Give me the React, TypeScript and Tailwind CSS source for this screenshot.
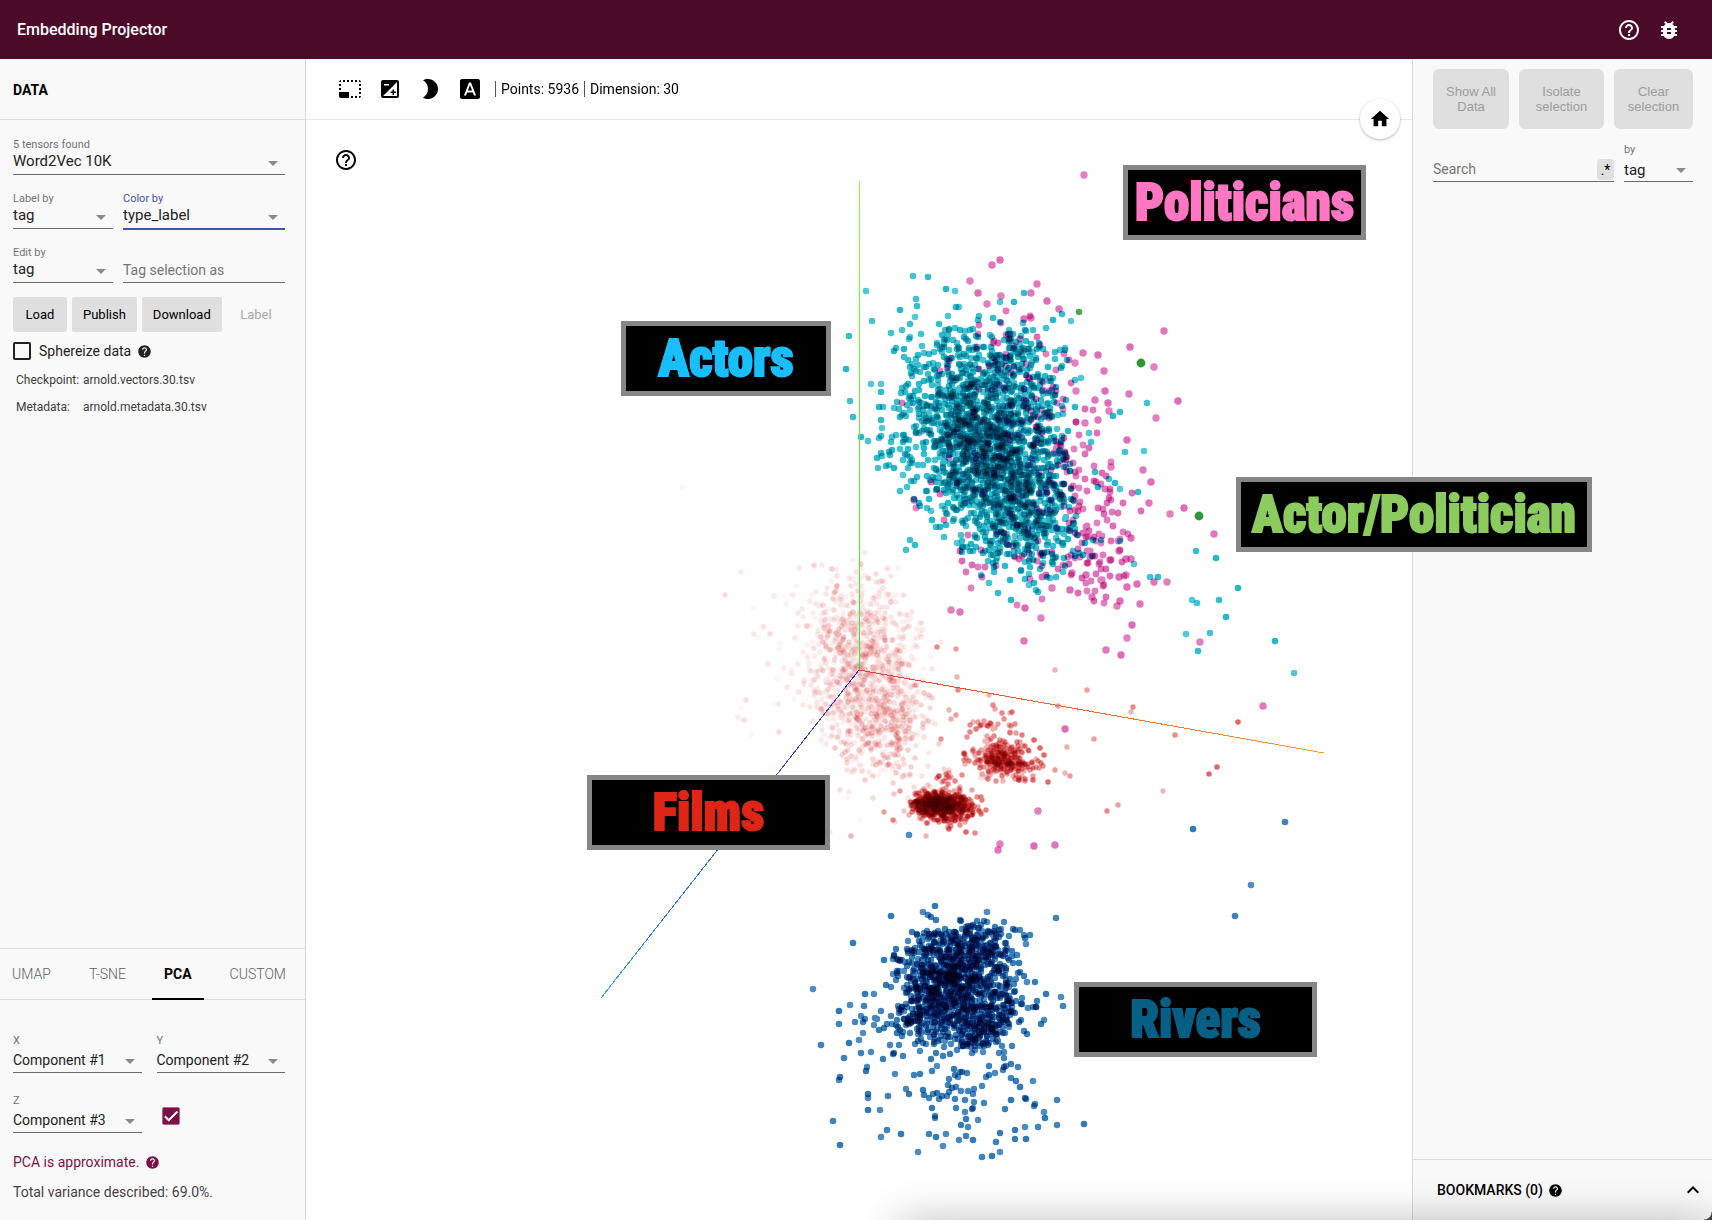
import { useId } from "react";
import type { ReactNode } from "react";
import {
  MdBrightness2,
  MdBugReport,
  MdCheck,
  MdExposure,
  MdFontDownload,
  MdHelp,
  MdHelpOutline,
  MdHome,
  MdKeyboardArrowUp,
  MdPhotoSizeSelectSmall,
} from "react-icons/md";

/* ---------- point cloud data ---------- */

type Point = [number, number];

function randomSource(seed: number) {
  let a = seed;
  return () => {
    a = (a + 0x6d2b79f5) | 0;
    let t = Math.imul(a ^ (a >>> 15), 1 | a);
    t = (t + Math.imul(t ^ (t >>> 7), 61 | t)) ^ t;
    return ((t ^ (t >>> 14)) >>> 0) / 4294967296;
  };
}

type Cluster = { n: number; x: number; y: number; sx: number; sy: number; tilt?: number; max?: number };

/* Gaussian blob cut off at `max` deviations and turned by `tilt` degrees. */
function blob(rand: () => number, c: Cluster): Point[] {
  const out: Point[] = [];
  const a = ((c.tilt ?? 0) * Math.PI) / 180;
  const max = c.max ?? 2.3;
  while (out.length < c.n) {
    const r = Math.sqrt(-2 * Math.log(1 - rand()));
    const t = rand() * Math.PI * 2;
    if (r > max) continue;
    const dx = r * Math.cos(t) * c.sx;
    const dy = r * Math.sin(t) * c.sy;
    out.push([Math.round(c.x + dx * Math.cos(a) - dy * Math.sin(a)), Math.round(c.y + dx * Math.sin(a) + dy * Math.cos(a))]);
  }
  return out;
}

function cloud(seed: number, clusters: Cluster[]): Point[] {
  const rand = randomSource(seed);
  return clusters.flatMap((c) => blob(rand, c));
}

function dots(points: Point[], r: number) {
  return points.map(([x, y]) => `M${x - r} ${y}a${r} ${r} 0 1 0 ${2 * r} 0a${r} ${r} 0 1 0 ${-2 * r} 0`).join("");
}

const actors = cloud(11, [
  { n: 1080, x: 984, y: 442, sx: 40, sy: 57, tilt: -14, max: 2.1 },
  { n: 380, x: 991, y: 452, sx: 27, sy: 42, tilt: -18, max: 2 },
  { n: 240, x: 1028, y: 526, sx: 27, sy: 29, tilt: -10, max: 2.1 },
  { n: 130, x: 1010, y: 360, sx: 28, sy: 22, max: 2.2 },
  { n: 90, x: 1048, y: 450, sx: 12, sy: 55, tilt: -8 },
  { n: 80, x: 932, y: 385, sx: 32, sy: 36 },
  { n: 26, x: 905, y: 450, sx: 18, sy: 40 },
]);
const actorOutliers: Point[] = [
  [866, 291], [913, 276], [928, 277], [946, 289], [955, 291], [916, 299], [917, 306], [900, 310], [915, 317], [872, 321],
  [849, 336], [846, 369], [871, 384], [850, 401], [853, 417], [861, 437], [881, 384], [891, 333], [896, 348], [904, 349],
  [910, 337], [921, 334], [939, 324], [956, 307], [959, 307], [955, 328], [1024, 293], [1014, 302], [1000, 302], [979, 316],
  [993, 318], [1053, 320], [1071, 321], [1046, 328], [1062, 314], [1025, 330], [1065, 348], [1147, 403], [1120, 412], [1113, 416],
  [1144, 451], [1125, 452], [1138, 492], [1115, 483], [1120, 489], [1109, 479], [1095, 472], [1098, 487], [1081, 378], [1075, 380],
  [1066, 400], [1075, 407], [1089, 433], [1091, 442], [1196, 551], [1216, 558], [1134, 564], [1150, 577], [1158, 577], [1238, 588],
  [1192, 600], [1197, 603], [1219, 600], [1226, 617], [1186, 634], [1210, 633], [1198, 651], [1275, 641], [1294, 673], [878, 468],
  [886, 466], [894, 468], [903, 475], [907, 487], [914, 499], [919, 503], [931, 511], [906, 550], [915, 545], [940, 527],
  [981, 575], [989, 583], [998, 593], [1011, 600], [1029, 585], [1036, 590], [1038, 592], [1010, 580], [1050, 578], [988, 561],
  [962, 552], [970, 551], [957, 543], [944, 537], [881, 453], [892, 450], [882, 428], [896, 435], [1018, 551], [1083, 555],
  [1092, 556], [1120, 541], [1093, 540], [1085, 543], [1101, 540],
];

const politicians = cloud(23, [
  { n: 90, x: 1068, y: 480, sx: 20, sy: 58, tilt: -16 },
  { n: 50, x: 1100, y: 530, sx: 24, sy: 34 },
  { n: 32, x: 1015, y: 355, sx: 34, sy: 26 },
  { n: 24, x: 1045, y: 400, sx: 22, sy: 40 },
  { n: 40, x: 1020, y: 555, sx: 42, sy: 22 },
  { n: 40, x: 985, y: 450, sx: 40, sy: 60 },
]);
const politicianOutliers: Point[] = [
  [1084, 175], [992, 265], [1000, 260], [970, 281], [1037, 284], [978, 293], [1001, 296], [1031, 293], [1047, 301], [987, 304],
  [1059, 309], [1024, 319], [1031, 318], [1164, 331], [1130, 347], [1154, 367], [1083, 353], [1098, 355], [1075, 363], [1104, 371],
  [1178, 401], [1156, 418], [1129, 394], [1105, 391], [1076, 391], [1095, 400], [1108, 403], [1109, 411], [1098, 420], [1127, 440],
  [1085, 423], [1143, 470], [1151, 482], [1111, 467], [1149, 503], [1184, 508], [1170, 514], [1214, 534], [1131, 538], [1167, 582],
  [1154, 582], [1137, 584], [1126, 575], [1140, 604], [1120, 601], [1117, 606], [1092, 597], [1070, 590], [1052, 588], [1072, 573],
  [1086, 575], [951, 610], [960, 612], [1025, 608], [1041, 618], [1024, 641], [1132, 625], [1127, 638], [1106, 650], [1121, 655],
  [1200, 642], [1263, 706], [1065, 729], [1038, 811], [1055, 845], [1034, 846], [1000, 844], [998, 850], [1127, 587], [1102, 580],
  [1110, 560], [1126, 559], [1119, 551], [1131, 559], [1119, 577], [1101, 580], [914, 500],
];

const farFilms = cloud(37, [
  { n: 460, x: 862, y: 655, sx: 33, sy: 44, max: 2.2 },
  { n: 200, x: 878, y: 712, sx: 30, sy: 32, tilt: 20 },
  { n: 130, x: 845, y: 650, sx: 42, sy: 44 },
]);
const midFilms = cloud(41, [
  { n: 270, x: 868, y: 675, sx: 28, sy: 56, tilt: -12, max: 2.1 },
  { n: 150, x: 884, y: 724, sx: 24, sy: 28 },
  { n: 22, x: 925, y: 775, sx: 26, sy: 20 },
]);
const faintOutliers: Point[] = [
  [682, 487], [741, 572], [725, 595], [753, 608], [754, 634], [770, 634], [780, 643], [774, 596], [746, 700], [741, 708],
  [738, 717], [744, 720], [751, 735], [778, 704], [779, 732], [777, 679], [799, 568], [814, 565], [814, 567], [864, 553],
  [840, 790], [848, 798], [849, 792], [873, 798], [860, 820], [830, 832], [895, 822],
];
const nearFilms = cloud(53, [
  { n: 40, x: 985, y: 730, sx: 22, sy: 12 },
  { n: 150, x: 1003, y: 759, sx: 19, sy: 10, tilt: 8 },
  { n: 30, x: 1012, y: 762, sx: 28, sy: 14 },
  { n: 170, x: 945, y: 806, sx: 18, sy: 10, tilt: 4 },
  { n: 14, x: 946, y: 778, sx: 9, sy: 5 },
]);
const denseFilms = cloud(59, [
  { n: 340, x: 942, y: 806, sx: 17, sy: 8, tilt: 6, max: 2 },
  { n: 260, x: 935, y: 805, sx: 11, sy: 5, max: 2 },
  { n: 80, x: 1002, y: 760, sx: 14, sy: 8, tilt: 10 },
]);
const nearOutliers: Point[] = [
  [1055, 670], [1087, 690], [1133, 707], [1131, 712], [1094, 739], [1175, 735], [957, 677], [956, 649], [958, 690], [989, 695],
  [1058, 706], [993, 705], [949, 710], [956, 715], [937, 647], [1163, 791], [1118, 805], [1107, 811], [851, 836], [900, 791],
  [893, 820], [926, 836], [884, 812], [975, 833],
];
const brightOutliers: Point[] = [
  [1238, 722], [1217, 767], [1209, 774], [1048, 782], [1033, 780], [1044, 755], [1040, 748], [1034, 740], [966, 832], [949, 829],
];

const rivers = cloud(67, [
  { n: 660, x: 954, y: 978, sx: 31, sy: 32, max: 2.1 },
  { n: 190, x: 946, y: 983, sx: 20, sy: 24 },
  { n: 90, x: 978, y: 1036, sx: 16, sy: 8, tilt: -25 },
  { n: 90, x: 976, y: 943, sx: 22, sy: 12 },
  { n: 110, x: 925, y: 1020, sx: 24, sy: 14 },
  { n: 100, x: 1000, y: 1010, sx: 20, sy: 20 },
  { n: 50, x: 960, y: 1075, sx: 40, sy: 20 },
  { n: 22, x: 985, y: 1110, sx: 34, sy: 20 },
  { n: 20, x: 885, y: 1030, sx: 18, sy: 24 },
]);
const riverOutliers: Point[] = [
  [909, 835], [1285, 822], [1193, 829], [1251, 885], [1235, 916], [935, 906], [923, 912], [928, 915], [891, 916], [987, 912],
  [1056, 918], [853, 943], [813, 989], [821, 1045], [839, 1011], [850, 1005], [839, 1024], [865, 994], [874, 994], [864, 1006],
  [849, 1043], [859, 1040], [844, 1058], [840, 1077], [839, 1080], [861, 1053], [868, 1094], [868, 1098], [888, 1096], [868, 1110],
  [880, 1110], [833, 1121], [840, 1145], [881, 1137], [887, 1130], [901, 1134], [918, 1152], [929, 1134], [936, 1137], [943, 1146],
  [966, 1136], [973, 1140], [946, 1134], [982, 1157], [992, 1156], [1000, 1152], [996, 1142], [1026, 1139], [1025, 1127], [1038, 1127],
  [1045, 1118], [1044, 1112], [1057, 1100], [1084, 1124], [1033, 1081], [1011, 1078], [1046, 994], [1061, 997], [1063, 1006], [1036, 1007],
  [1028, 1008], [1036, 1007], [1022, 1004], [1027, 982], [1030, 935], [1025, 938], [1026, 944], [1015, 930], [884, 960], [893, 959],
  [1017, 955], [1019, 963], [1018, 973], [999, 930], [1020, 1087], [1034, 1106], [1026, 1099], [1011, 1100], [1006, 1066], [1018, 1067],
];

type Series = { points: Point[]; r: number; fill: string; layers: number; low: number; high: number };

const series: Series[] = [
  { points: farFilms, r: 2.7, fill: "#d62728", layers: 8, low: 0.05, high: 0.12 },
  { points: midFilms, r: 2.7, fill: "#d62728", layers: 8, low: 0.12, high: 0.25 },
  { points: faintOutliers, r: 2.7, fill: "#d62728", layers: 3, low: 0.05, high: 0.16 },
  { points: nearFilms, r: 2.7, fill: "#d62728", layers: 8, low: 0.35, high: 0.6 },
  { points: denseFilms, r: 2.6, fill: "#cf2324", layers: 10, low: 0.5, high: 0.65 },
  { points: nearOutliers, r: 2.7, fill: "#d62728", layers: 3, low: 0.35, high: 0.55 },
  { points: brightOutliers, r: 2.8, fill: "#d62728", layers: 1, low: 0.7, high: 0.7 },
  { points: actors, r: 3.3, fill: "#17b5c8", layers: 16, low: 0.78, high: 0.96 },
  { points: actorOutliers, r: 3.3, fill: "#17b5c8", layers: 4, low: 0.75, high: 0.95 },
  { points: politicians, r: 3.4, fill: "#db5fb2", layers: 5, low: 0.78, high: 0.92 },
  { points: politicianOutliers, r: 3.7, fill: "#db5fb2", layers: 3, low: 0.8, high: 0.92 },
  { points: rivers, r: 3.2, fill: "#1f6fb0", layers: 14, low: 0.8, high: 0.92 },
  { points: riverOutliers, r: 3.3, fill: "#1f6fb0", layers: 3, low: 0.8, high: 0.92 },
  { points: [[1141, 363], [1199, 516]], r: 4.4, fill: "#2c9a33", layers: 1, low: 1, high: 1 },
  { points: [[1079, 312]], r: 3.3, fill: "#2c9a33", layers: 1, low: 0.85, high: 0.85 },
];

const layers = series.flatMap((s) =>
  Array.from({ length: s.layers }, (_, i) => ({
    d: dots(s.points.filter((_, k) => k % s.layers === i), s.r),
    fill: s.fill,
    opacity: s.layers === 1 ? s.high : s.low + ((s.high - s.low) * i) / (s.layers - 1),
  })),
);

function ScatterPlot() {
  return (
    <svg className="absolute inset-0 h-full w-full bg-white" viewBox="306 59 1106 1161" role="img" aria-label="Projection of 5936 points">
      <defs>
        <linearGradient id="axis-y" gradientUnits="userSpaceOnUse" x1="0" y1="181" x2="0" y2="670">
          <stop offset="0" stopColor="#8bfb45" />
          <stop offset="1" stopColor="#33e633" />
        </linearGradient>
        <linearGradient id="axis-x" gradientUnits="userSpaceOnUse" x1="859" y1="0" x2="1324" y2="0">
          <stop offset="0" stopColor="#f43333" />
          <stop offset="1" stopColor="#fb9a2c" />
        </linearGradient>
        <linearGradient id="axis-z" gradientUnits="userSpaceOnUse" x1="859" y1="670" x2="602" y2="998">
          <stop offset="0" stopColor="#2f2fc4" />
          <stop offset="1" stopColor="#2a98f5" />
        </linearGradient>
      </defs>
      {layers.map((l, i) => (
        <path key={i} d={l.d} fill={l.fill} fillOpacity={l.opacity} className="mix-blend-multiply" />
      ))}
      <path d="M859.5 181V670" stroke="url(#axis-y)" fill="none" />
      <path d="M859 670L1324 753" stroke="url(#axis-x)" fill="none" shapeRendering="crispEdges" />
      <path d="M859 670L601 998" stroke="url(#axis-z)" fill="none" shapeRendering="crispEdges" />
    </svg>
  );
}

/* ---------- controls ---------- */

function Caret() {
  return <span className="pointer-events-none absolute right-[7px] bottom-[9px] h-0 w-0 border-x-5 border-t-5 border-x-transparent border-t-[#8a8a8a]" />;
}

function SelectField(props: { label: string; value: string; className?: string; tall?: boolean; active?: boolean }) {
  const id = useId();
  return (
    <div className={`flex flex-col ${props.className ?? ""}`}>
      <label htmlFor={id} className={`text-[11px] ${props.active ? "text-[#3f51b5]" : "text-[#737373]"} ${props.tall ? "pt-px leading-[18px]" : "leading-[18px] -mb-1"}`}>
        {props.label}
      </label>
      <div className="relative">
        <select
          id={id}
          defaultValue={props.value}
          className={`block w-full appearance-none bg-transparent pr-5 pb-0.5 text-[#212121] outline-none ${
            props.value.startsWith("Component") ? "text-sm" : "text-[15px]"
          } ${props.active ? "-mb-px h-[26px] border-b-2 border-[#3f51b5]" : props.tall ? "h-[23px] border-b border-[#6b6b6b]" : "h-[25px] border-b border-[#6b6b6b]"}`}
        >
          <option>{props.value}</option>
        </select>
        <Caret />
      </div>
    </div>
  );
}

function FlatButton({ children }: { children: ReactNode }) {
  return <button className="h-[35px] min-w-[54px] rounded-xs bg-[#dfdfdf] px-[11px] text-[13px] text-black">{children}</button>;
}

function DisabledButton({ children }: { children: ReactNode }) {
  return (
    <button disabled className="h-15 rounded-md bg-[#dfdfdf] px-3 font-['Liberation_Sans',sans-serif] text-[13px] leading-[15px] text-[#9c9c9c]">
      {children}
    </button>
  );
}

function Tab({ children, active }: { children: ReactNode; active?: boolean }) {
  return (
    <button
      role="tab"
      aria-selected={!!active}
      className={
        active
          ? "-mb-px h-[51px] border-b-2 border-black px-3 text-sm font-bold text-black"
          : "h-[50px] px-3 text-sm font-light text-[#5f5f5f]"
      }
    >
      {children}
    </button>
  );
}

function DataPanel() {
  return (
    <aside className="flex w-[306px] shrink-0 flex-col border-r border-[#d9d9d9] bg-[#f9f9f9]">
      <h2 className="flex h-[61px] items-center border-b border-[#dcdcdc] px-[13px] pt-0.5 text-sm font-bold text-black">DATA</h2>
      <section className="flex flex-col px-[13px] pt-4 pr-5">
        <SelectField label="5 tensors found" value="Word2Vec 10K" />
        <div className="mt-[15px] flex gap-2.5">
          <SelectField label="Label by" value="tag" className="w-[100px]" />
          <SelectField label="Color by" value="type_label" className="flex-1" active />
        </div>
        <div className="mt-[15px] flex items-end gap-2.5">
          <SelectField label="Edit by" value="tag" className="w-[100px]" />
          <input
            aria-label="Tag selection as"
            placeholder="Tag selection as"
            className="h-[23px] min-w-0 flex-1 border-b border-[#6b6b6b] bg-transparent pb-0.5 text-sm outline-none placeholder:text-[#757575]"
          />
        </div>
        <div className="mt-3.5 flex gap-[5px]">
          <FlatButton>Load</FlatButton>
          <FlatButton>Publish</FlatButton>
          <FlatButton>Download</FlatButton>
          <button disabled className="flex-1 px-1 text-[13px] text-[#a8a8a8]">
            Label
          </button>
        </div>
        <div className="mt-2.5 flex h-[18px] items-center text-sm text-[#212121]">
          <label className="flex items-center gap-2">
            <input type="checkbox" className="h-[18px] w-[18px] appearance-none rounded-xs border-2 border-[#212121]" />
            Sphereize data
          </label>
          <MdHelp className="ml-1.5 h-[15px] w-[15px]" />
        </div>
        <dl className="mt-2.5 grid grid-cols-[67px_1fr] gap-y-[7px] pl-[3px] text-xs leading-5 text-[#3c3c3c]">
          <dt>Checkpoint:</dt>
          <dd>arnold.vectors.30.tsv</dd>
          <dt>Metadata:</dt>
          <dd>arnold.metadata.30.tsv</dd>
        </dl>
      </section>
      <div className="flex-1" />
      <div role="tablist" className="flex h-[52px] justify-between border-y border-[#dcdcdc] pr-[7px]">
        <Tab>UMAP</Tab>
        <Tab>T-SNE</Tab>
        <Tab active>PCA</Tab>
        <Tab>CUSTOM</Tab>
      </div>
      <section className="px-[13px] pt-[31px] pr-5 pb-[18px]">
        <div className="grid grid-cols-2 gap-x-[15px] gap-y-[18px]">
          <SelectField label="X" value="Component #1" tall />
          <SelectField label="Y" value="Component #2" tall />
          <SelectField label="Z" value="Component #3" tall />
          <label className="relative mt-4 ml-[5px] h-[18px] w-[18px]">
            <input type="checkbox" defaultChecked aria-label="Use component 3" className="block h-[18px] w-[18px] appearance-none rounded-xs bg-[#7b1246]" />
            <MdCheck className="pointer-events-none absolute inset-0 h-[18px] w-[18px] stroke-white stroke-1 text-white" />
          </label>
        </div>
        <p className="mt-[19px] flex items-center gap-1.5 text-sm leading-5 text-[#7b1246]">
          PCA is approximate.
          <MdHelp className="h-[15px] w-[15px]" />
        </p>
        <p className="mt-2.5 text-sm leading-5 text-[#444444]">Total variance described: 69.0%.</p>
      </section>
    </aside>
  );
}

function Caption({ children, className }: { children: ReactNode; className: string }) {
  return (
    <div
      className={`absolute z-10 flex h-[75px] items-center justify-center border-5 border-[#868686] bg-black pt-0.5 font-[Impact,'Roboto_Condensed','Liberation_Sans_Narrow','Roboto',sans-serif] text-[51px] font-black [-webkit-text-stroke:2px_currentColor] ${className}`}
    >
      {children}
    </div>
  );
}

function IconButton({ label, children }: { label: string; children: ReactNode }) {
  return (
    <button aria-label={label} className="text-2xl">
      {children}
    </button>
  );
}

function Projection() {
  return (
    <main className="relative z-10 min-w-0 flex-1">
      <ScatterPlot />
      <div className="relative flex h-[61px] items-center gap-4 border-b border-[#e6e6e6] pl-8">
        <IconButton label="Bounding box selection"><MdPhotoSizeSelectSmall /></IconButton>
        <IconButton label="Edit mode"><MdExposure /></IconButton>
        <IconButton label="Night mode"><MdBrightness2 /></IconButton>
        <IconButton label="3D labels"><MdFontDownload /></IconButton>
        <div className="-ml-[3px] flex gap-[5px] text-sm leading-4 text-black">
          <span className="border-l border-[#555555] pl-[5px]">Points: 5936</span>
          <span className="border-l border-[#555555] pl-[5px]">Dimension: 30</span>
        </div>
        <button aria-label="Reset zoom" className="absolute right-3 -bottom-5 flex h-10 w-10 items-center justify-center rounded-full bg-white shadow-[0_1px_3px_rgba(0,0,0,0.3)]">
          <MdHome className="h-[22px] w-[22px]" />
        </button>
      </div>
      <div className="relative pt-[28px] pl-7">
        <IconButton label="Help"><MdHelpOutline /></IconButton>
      </div>
      <Caption className="top-[106px] left-[817px] w-[243px] text-[#ff77c2]">Politicians</Caption>
      <Caption className="top-[262px] left-[315px] w-[210px] text-[#18bfff]">Actors</Caption>
      <Caption className="top-[418px] left-[930px] w-[356px] text-[#8ccb5e]">Actor/Politician</Caption>
      <Caption className="top-[716px] left-[281px] w-[243px] text-[#df2516]">Films</Caption>
      <Caption className="top-[923px] left-[768px] w-[243px] text-[#075f85]">Rivers</Caption>
    </main>
  );
}

function Inspector() {
  return (
    <aside className="flex w-[300px] shrink-0 flex-col border-l border-[#d9d9d9] bg-[#f9f9f9]">
      <div className="grid grid-cols-[76px_85px_79px] gap-2.5 pt-2.5 pl-5">
        <DisabledButton>Show All Data</DisabledButton>
        <DisabledButton>Isolate selection</DisabledButton>
        <DisabledButton>Clear selection</DisabledButton>
      </div>
      <div className="mt-[11px] flex items-end gap-2.5 pr-[19px] pl-5">
        <div className="flex min-w-0 flex-1 border-b border-[#6b6b6b]">
          <input aria-label="Search" placeholder="Search" className="h-[22px] min-w-0 flex-1 bg-transparent pb-0.5 text-sm outline-none placeholder:text-[#757575]" />
          <button aria-label="Use regular expression" className="h-[21px] w-[17px] rounded-sm bg-[#dfdfdf] text-sm leading-5 text-black">.*</button>
        </div>
        <SelectField label="by" value="tag" className="w-[69px] shrink-0" tall />
      </div>
      <div className="flex-1" />
      <div className="flex h-[61px] items-center border-t border-[#dcdcdc] pr-[7px] pl-6 text-sm font-medium text-black">
        BOOKMARKS (0)
        <MdHelp className="ml-[5px] h-[15px] w-[15px]" />
        <button aria-label="Expand bookmarks" className="ml-auto">
          <MdKeyboardArrowUp className="h-6 w-6" />
        </button>
      </div>
    </aside>
  );
}

export default function App() {
  return (
    <div className="relative flex min-h-screen flex-col overflow-hidden bg-white font-['Roboto',sans-serif]">
      <header className="flex h-[59px] items-center bg-[#4c0a29] pr-[31px] pl-[17px] text-white">
        <h1 className="flex-1 text-base font-medium">Embedding Projector</h1>
        <div className="flex gap-4">
          <IconButton label="Documentation"><MdHelpOutline /></IconButton>
          <IconButton label="Report a bug"><MdBugReport /></IconButton>
        </div>
      </header>
      <div className="flex flex-1">
        <DataPanel />
        <Projection />
        <Inspector />
      </div>
      <div className="pointer-events-none absolute right-0 -bottom-10 left-[900px] z-20 h-10 shadow-[0_4px_45px_rgba(0,0,0,0.3)]" />
      <div className="pointer-events-none absolute right-0 bottom-0 z-20 h-2 w-2 bg-[radial-gradient(circle_at_0_0,transparent_7px,#444444_8px)]" />
    </div>
  );
}
